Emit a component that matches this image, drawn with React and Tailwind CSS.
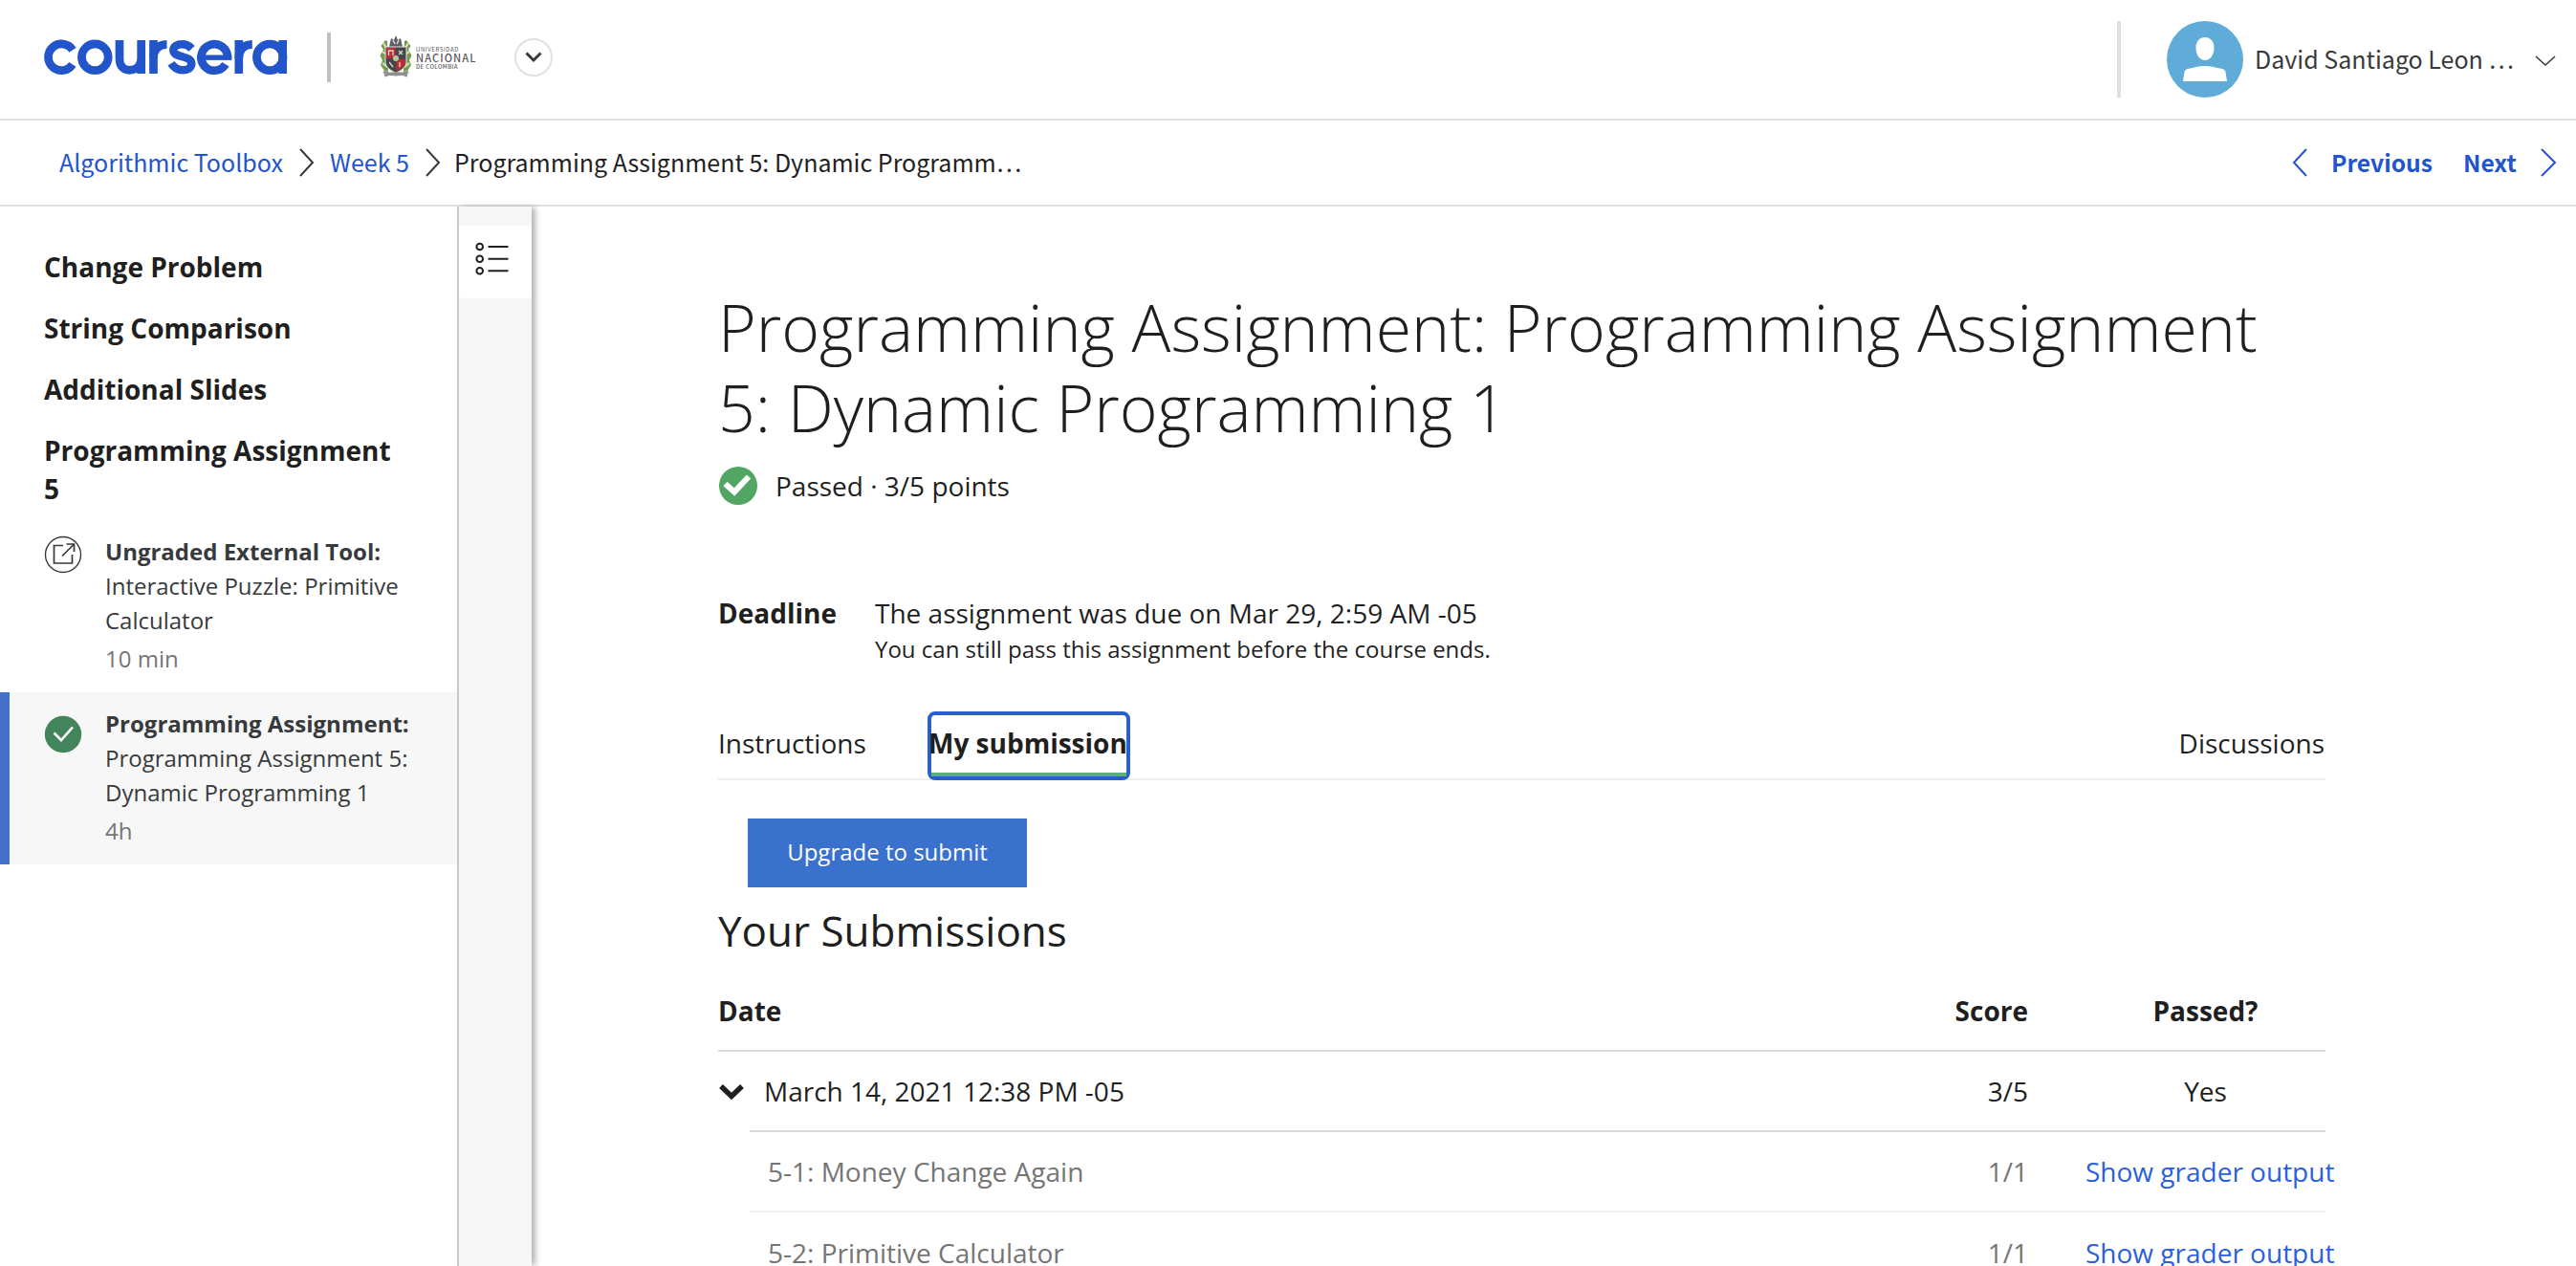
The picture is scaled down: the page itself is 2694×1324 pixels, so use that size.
import React from "react";

const CJK = "font-['Noto_Sans_CJK_SC','Open_Sans',sans-serif]";

function CourseraLogo() {
  return (
    <svg width="256" height="38" viewBox="0 0 256 38" fill="none" stroke="#2155c9" strokeWidth="8.7">
      <path d="M29.9 11.300A13.800 13.800 0 1 0 29.900 26.300" />
      <circle cx="53.300" cy="18.800" r="13.900" />
      <path d="M79 1V20.500C79 28 83 32.300 89.500 32.300C96 32.300 101.700 28 101.700 20V1M101.700 1V36" />
      <path d="M114.500 1V36" />
      <path d="M114.500 20C114.500 11 119 5.500 128.500 5.300" />
      <path d="M154.500 9.800C151.500 6.500 148.500 5.200 144.500 5.200C139 5.200 135.300 7.800 135.300 11.300C135.300 20.500 154.300 16 154.300 25.800C154.300 30 150 32.300 145 32.300C139.500 32.300 136 30 133 25.200" strokeWidth="8.400" />
      <path d="M192 20.500V18.800A13.800 13.800 0 1 0 189.900 26.300" />
      <path d="M166 19.200H196.300" strokeWidth="5.400" />
      <path d="M203.800 1V36" />
      <path d="M203.800 20C203.800 11 208.300 5.500 217.800 5.300" />
      <circle cx="236.200" cy="18.800" r="13.800" />
      <path d="M249.700 1V36" />
    </svg>
  );
}

function Crest() {
  return (
    <svg width="34" height="44" viewBox="0 0 34 44">
      <path d="M6 5L1.500 11L4 15L0.500 21L3 26L1 31L5 37L9 38L8 6ZM28 5L32.500 11L30 15L33.500 21L31 26L33 31L29 37L25 38L26 6Z" fill="#739b48" />
      <path d="M4 8L7 13M3 17L7 20M3 29L8 33M30 8L27 13M31 17L27 20M31 29L26 33" stroke="#d8e6b8" strokeWidth="2" />
      <path d="M10 12L12 3L15 5L17 0L19 5L22 3L24 12Z" fill="#615d66" />
      <path d="M14 5L16 9M20 5L18 9" stroke="#dcdce0" strokeWidth="1.500" />
      <path d="M6 12H28V28C28 34 20 38 17 39C14 38 6 34 6 28Z" fill="#45474c" stroke="#e5e5e5" />
      <path d="M7 13H16.500V24H7ZM17.500 25H27V29C26 34 20 36 17.500 37Z" fill="#bc2e35" />
      <path d="M9.500 21V16H14V21M20 16L24 20M24 16L20 20M10 28L14 33M21 28V33" stroke="#ddd6d2" strokeWidth="1.300" fill="none" />
      <circle cx="17" cy="24" r="3" fill="#b9c79f" />
      <path d="M4 38Q17 44 30 38M5 42Q17 37 29 42" stroke="#8e908b" strokeWidth="3" fill="none" />
    </svg>
  );
}

function Chevron({ w, h, d, color, sw }) {
  return (
    <svg width={w} height={h} viewBox={`0 0 ${w} ${h}`} className="shrink-0">
      <path d={d} fill="none" stroke={color} strokeWidth={sw} />
    </svg>
  );
}

const RIGHT = "M1 1L14 15L1 29";

function Header() {
  return (
    <header className={`flex h-[126px] items-start border-b-2 border-[#e0e0e0] ${CJK}`}>
      <div className="ml-[46px] mt-[41px] h-[38px]"><CourseraLogo /></div>
      <div className="ml-[40px] mt-[34px] h-[52px] w-1 bg-[#c1c1c1]" />
      <div className="ml-[51px] mt-[37px] flex">
        <Crest />
        <div className="ml-[4px] mt-[11px] w-[61px] whitespace-nowrap text-[#58585a]">
          <div className="text-[6px] leading-[7px] tracking-[0.6px]">UNIVERSIDAD</div>
          <div className="text-[11px] leading-[11px] font-medium tracking-[1.1px]">NACIONAL</div>
          <div className="text-[6px] leading-[8px] font-medium tracking-[0.4px]">DE COLOMBIA</div>
        </div>
      </div>
      <div className="ml-[42px] mt-[40px] flex size-10 items-center justify-center rounded-full border-2 border-[#e1e1e1]">
        <Chevron w={18} h={12} d="M1.5 1.5L9 9L16.5 1.5" color="#373a3c" sw={3} />
      </div>
      <div className="ml-auto mt-[22px] h-20 w-1 bg-[#e0e0e0]" />
      <svg width="80" height="80" viewBox="0 0 80 80" className="ml-[48px] mt-[22px]">
        <circle cx="40" cy="40" r="40" fill="#5eacd7" />
        <path d="M40 17C34 17 30 22 30.500 29C31 36 34.500 41 40 41S49 36 49.500 29C50 22 46 17 40 17ZM17 63L18.500 53Q19 50.500 22 50C28 48.500 34 47 40 47S52 48.500 58 50Q61 50.500 61.500 53L63 63Z" fill="#fff" />
      </svg>
      <div className="ml-[12px] mt-[39px] w-[271px] whitespace-nowrap text-[25px] leading-[44px] text-[#373a3c]">David Santiago Leon …</div>
      <div className="ml-[22px] mr-[21px] mt-[58px]">
        <Chevron w={22} h={12} d="M1 1L11 10L21 1" color="#373a3c" sw={1.6} />
      </div>
    </header>
  );
}

function Breadcrumb() {
  return (
    <nav className={`flex h-[90px] items-center whitespace-nowrap border-b-2 border-[#e0e0e0] text-[25px] leading-[44px] text-[#1f1f1f] ${CJK}`}>
      <a className="mb-[2px] ml-[62px] w-[236px] text-[#2254ce]">Algorithmic Toolbox</a>
      <span className="ml-[15px]"><Chevron w={16} h={30} d={RIGHT} color="#373a3c" sw={2} /></span>
      <a className="mb-[2px] ml-[16px] w-[84px] text-[#2254ce]">Week 5</a>
      <span className="ml-[16px]"><Chevron w={16} h={30} d={RIGHT} color="#373a3c" sw={2} /></span>
      <span className="mb-[2px] ml-[14px]">Programming Assignment 5: Dynamic Programm…</span>
      <div className="ml-auto mr-[20px] flex items-center text-[24.600px] font-bold text-[#2254ce]">
        <Chevron w={17} h={30} d="M15 1L2 15L15 29" color="#2254ce" sw={2} />
        <span className="mb-[2px] ml-[24px] w-[108px]">Previous</span>
        <span className="mb-[2px] ml-[30px] w-[58px]">Next</span>
        <span className="ml-[23px]"><Chevron w={17} h={30} d="M1 1L15 15L1 29" color="#2254ce" sw={2} /></span>
      </div>
    </nav>
  );
}

function SideItem({ active, icon, title, lines, time }) {
  return (
    <div className={active ? "flex h-[180px] border-l-[10px] border-[#4171c9] bg-[#f7f7f7] pl-9" : "flex h-[180px] pl-[46px]"}>
      <div className={active ? "mt-[24px]" : "mt-[16px]"}>{icon}</div>
      <div className="ml-[24px] mt-[15px] whitespace-nowrap text-[24px] leading-[36px] text-[#373a3c]">
        <div className="font-bold">{title}</div>
        {lines.map((l) => <div key={l}>{l}</div>)}
        <div className="mt-1 text-[#757575]">{time}</div>
      </div>
    </div>
  );
}

function Sidebar() {
  return (
    <aside className="w-[478px] shrink-0">
      <div className="space-y-6 pl-[46px] pt-[43px] text-[28px] font-bold leading-[40px] text-[#1f1f1f]">
        <div>Change Problem</div>
        <div>String Comparison</div>
        <div>Additional Slides</div>
        <div>Programming Assignment<br />5</div>
      </div>
      <div className="mt-[13px]">
        <SideItem
          title="Ungraded External Tool:"
          lines={["Interactive Puzzle: Primitive", "Calculator"]}
          time="10 min"
          icon={
            <svg width="40" height="40" viewBox="0 0 40 40" fill="none" stroke="#373a3c">
              <circle cx="20" cy="20" r="18.500" strokeWidth="1.400" />
              <path d="M20 10.500H10.500V29H29.500V20M23.500 9H31.500V17M31.500 9L19 21.500" strokeWidth="1.700" />
            </svg>
          }
        />
        <SideItem
          active
          title="Programming Assignment:"
          lines={["Programming Assignment 5:", "Dynamic Programming 1"]}
          time="4h"
          icon={
            <svg width="40" height="40" viewBox="0 0 40 40">
              <circle cx="20" cy="20" r="19.200" fill="#43855a" />
              <path d="M10.500 18.500L18 26L30 12.500" fill="none" stroke="#fff" strokeWidth="2.600" />
            </svg>
          }
        />
      </div>
    </aside>
  );
}

function Rail() {
  return (
    <div className="h-[1108px] w-[78px] shrink-0 border-l-2 border-[#c8c8c8] bg-[#f6f6f6] pt-[20px] shadow-[5px_0_6px_-1px_rgba(0,0,0,0.3)]">
      <div className="h-[76px] rounded bg-white pl-[17px] pt-[17px]">
        <svg width="36" height="36" viewBox="0 0 36 36" fill="none" stroke="#1f1f1f" strokeWidth="2">
          <circle cx="4.700" cy="5" r="3.300" />
          <circle cx="4.700" cy="17.700" r="3.300" />
          <circle cx="4.700" cy="30.200" r="3.300" />
          <path d="M13.500 5H34.500M13.500 17.700H34.500M13.500 30.200H34.500" />
        </svg>
      </div>
    </div>
  );
}

function TaskRow({ name, last }) {
  return (
    <div className={last ? "flex h-[84px] items-center" : "flex h-[84px] items-center border-b-2 border-[#f0f0f0]"}>
      <div className="flex-1 pl-[19px] text-[#757575]">{name}</div>
      <div className="w-[100px] text-right text-[#757575]">1/1</div>
      <div className="w-[311px] pl-[60px]">
        <a className="text-[#2a5fde]">Show grader output</a>
      </div>
    </div>
  );
}

function Main() {
  return (
    <main className="ml-[195px] w-[1681px] whitespace-nowrap text-[28px] leading-[40px] text-[#1f1f1f]">
      <h1 className="mt-[84px] text-[68px] font-light leading-[84px]">
        Programming Assignment: Programming Assignment<br />5: Dynamic Programming 1
      </h1>
      <div className="mt-[20px] flex h-10 items-center">
        <svg width="42" height="40" viewBox="0 0 42 40">
          <circle cx="21" cy="20" r="20" fill="#52a663" />
          <path d="M7.500 18L17 26.500L32 10.500" fill="none" stroke="#fff" strokeWidth="6" />
        </svg>
        <span className="ml-[18px]">Passed · 3/5 points</span>
      </div>
      <div className="mt-[93px] flex">
        <div className="w-[164px] font-bold">Deadline</div>
        <div>
          <div>The assignment was due on Mar 29, 2:59 AM -05</div>
          <div className="text-[24px] leading-[36px]">You can still pass this assignment before the course ends.</div>
        </div>
      </div>
      <div className="mt-[47px] flex h-[72px] items-stretch border-b-2 border-[#eeeeee]">
        <div className="mt-[13px] w-[219px]">Instructions</div>
        <div className="relative z-10 -mb-[2px] flex w-[212px] justify-center rounded-lg border-4 border-[#2a5fc9] bg-white">
          <div className="w-[204px] shrink-0 border-b-4 border-[#5db075] pt-[9px] font-bold">
            <span className="-ml-[3px]">My submission</span>
          </div>
        </div>
        <div className="ml-auto mr-px mt-[13px]">Discussions</div>
      </div>
      <div className="ml-[31px] mt-[40px] flex h-[72px] w-[292px] items-center justify-center bg-[#3a71cd] pb-[2px] text-[24px] text-white">Upgrade to submit</div>
      <h2 className="mt-[19px] text-[44px] leading-[52px]">Your Submissions</h2>
      <div className="mt-[17px] flex h-[84px] items-center border-b-2 border-[#dadada] font-bold">
        <div className="flex-1">Date</div>
        <div className="w-[100px] text-right">Score</div>
        <div className="w-[311px] pl-[60px] text-center">Passed?</div>
      </div>
      <div className="flex h-[82px] items-center">
        <svg width="26" height="18" viewBox="0 0 26 18" className="ml-px mt-[2px] shrink-0">
          <path d="M2 3L13 13.500L24 3" fill="none" stroke="#1f1f1f" strokeWidth="5.500" />
        </svg>
        <div className="ml-[21px] flex-1">March 14, 2021 12:38 PM -05</div>
        <div className="w-[100px] text-right">3/5</div>
        <div className="w-[311px] pl-[60px] text-center">Yes</div>
      </div>
      <div className="ml-[33px] border-t-2 border-[#dadada]">
        <TaskRow name="5-1: Money Change Again" />
        <TaskRow name="5-2: Primitive Calculator" last />
      </div>
    </main>
  );
}

export default function App() {
  return (
    <div className="h-[1324px] w-[2694px] overflow-hidden bg-white font-['Open_Sans',sans-serif]">
      <Header />
      <Breadcrumb />
      <div className="flex">
        <Sidebar />
        <Rail />
        <Main />
      </div>
    </div>
  );
}
